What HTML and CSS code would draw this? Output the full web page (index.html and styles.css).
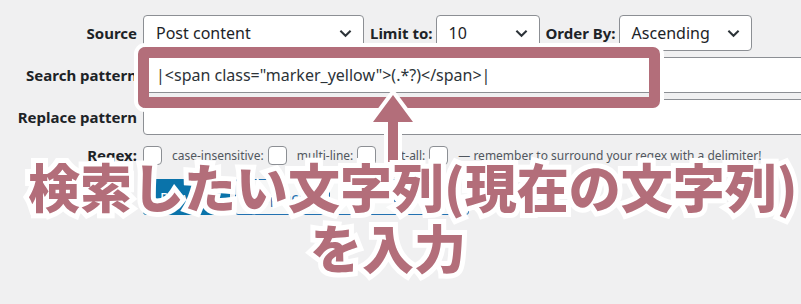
FILE: index.html
```html
<!DOCTYPE html>
<html lang="ja">
<head>
  <meta charset="UTF-8" />
  <title>Search Regex</title>
  <link rel="stylesheet" href="styles.css">
</head>
<body>
  <div class="page">
    <div class="form">
      <div class="label">Source</div>
      <div class="field field-row">
        <div class="select select-source">
          <span>Post content</span>
          <svg class="chevron" viewBox="0 0 14 9"><path d="M1.5 1.5 L7 7 L12.5 1.5" /></svg>
        </div>
        <span class="inline-label">Limit to:</span>
        <div class="select select-limit">
          <span>10</span>
          <svg class="chevron" viewBox="0 0 14 9"><path d="M1.5 1.5 L7 7 L12.5 1.5" /></svg>
        </div>
        <span class="inline-label">Order By:</span>
        <div class="select select-order">
          <span>Ascending</span>
          <svg class="chevron" viewBox="0 0 14 9"><path d="M1.5 1.5 L7 7 L12.5 1.5" /></svg>
        </div>
      </div>

      <div class="label">Search pattern</div>
      <div class="field">
        <div class="input">|&lt;span class="marker_yellow"&gt;(.*?)&lt;/span&gt;|</div>
      </div>

      <div class="label">Replace pattern</div>
      <div class="field">
        <div class="input"></div>
      </div>

      <div class="label label-regex">Regex:</div>
      <div class="field checks">
        <span class="checkbox"></span>
        <span class="check-label">case-insensitive:</span>
        <span class="checkbox"></span>
        <span class="check-label">multi-line:</span>
        <span class="checkbox"></span>
        <span class="check-label">dot-all:</span>
        <span class="checkbox"></span>
        <span class="check-note">— remember to surround your regex with a delimiter!</span>
      </div>

      <div></div>
      <div class="field buttons">
        <span class="button button-primary">Preview</span>
        <span class="button">Replace</span>
        <span class="button">Replace &amp; Save</span>
      </div>
    </div>

    <!-- annotation overlay -->
    <div class="callout"></div>
    <svg class="arrow" viewBox="0 0 801 304">
      <polygon points="393,95 413,122 398,122 398,162 388,162 388,122 373,122" />
    </svg>
    <div class="caption">
      <div class="caption-line">検索したい文字列(現在の文字列)</div>
      <div class="caption-line caption-line-2">を入力</div>
    </div>
  </div>
</body>
</html>
```

FILE: styles.css
```css
body {
  margin: 0;
  background-color: #f0f0f1;
  color: #1d2327;
  font-family: "Noto Sans", "Open Sans", sans-serif;
  overflow: hidden;
}
.page {
  position: relative;
  width: 801px;
  height: 304px;
  overflow: hidden;
}
.form {
  display: grid;
  grid-template-columns: 137px 680px;
  column-gap: 6px;
  row-gap: 6px;
  padding-top: 15px;
}
.label {
  display: flex;
  align-items: center;
  justify-content: flex-end;
  font-weight: bold;
  font-size: 15px;
  white-space: nowrap;
  color: #1d2327;
}
.label-regex {
  margin-top: 4px;
}
.field {
  display: flex;
  align-items: center;
}
.inline-label {
  font-weight: bold;
  font-size: 15px;
  margin: 0 3px 0 6px;
}
.select {
  box-sizing: border-box;
  height: 36px;
  display: flex;
  align-items: center;
  justify-content: space-between;
  padding: 0 11px 0 12px;
  background: #fff;
  border: 1px solid #8c8f94;
  border-radius: 4px;
  font-size: 16px;
}
.select-source { width: 221px; }
.select-limit { width: 104px; }
.select-order { width: 133px; }
.chevron {
  width: 13px;
  height: 9px;
  fill: none;
  stroke: #2c3338;
  stroke-width: 2.2;
}
.input {
  box-sizing: border-box;
  width: 680px;
  height: 36px;
  display: flex;
  align-items: center;
  padding: 0 12px;
  background: #fff;
  border: 1px solid #8c8f94;
  border-radius: 4px;
  font-size: 16px;
  color: #2c3338;
  white-space: nowrap;
}
.checks {
  margin-top: 4px;
  font-size: 12px;
  color: #50575e;
  white-space: nowrap;
}
.checkbox {
  box-sizing: border-box;
  flex: none;
  width: 19px;
  height: 19px;
  background: #fff;
  border: 1px solid #8c8f94;
  border-radius: 4px;
  margin-right: 10px;
}
.check-label {
  margin-right: 4px;
}
.buttons {
  margin-top: 8px;
  gap: 5px;
}
.button {
  box-sizing: border-box;
  height: 36px;
  display: flex;
  align-items: center;
  padding: 0 16px;
  border: 1px solid #2271b1;
  border-radius: 3px;
  background: #f6f7f7;
  color: #2271b1;
  font-size: 15px;
}
.button-primary {
  width: 87px;
  background: #0a73aa;
  border-color: #0a73aa;
  color: #fff;
}
.callout {
  position: absolute;
  left: 138px;
  top: 47px;
  width: 522px;
  height: 61px;
  box-sizing: border-box;
  border: 11px solid #b36e7a;
  border-radius: 7px;
  box-shadow: 0 0 0 4px #fff;
}
.arrow {
  position: absolute;
  left: 0;
  top: 0;
  width: 801px;
  height: 304px;
}
.arrow polygon {
  fill: #b36e7a;
  stroke: #fff;
  stroke-width: 8;
  stroke-linejoin: round;
  paint-order: stroke fill;
}
.caption {
  position: absolute;
  left: 28px;
  top: 155px;
  font-family: "Noto Sans CJK JP", sans-serif;
  font-weight: 900;
  font-size: 52px;
  line-height: 61px;
  color: #b36e7a;
  -webkit-text-stroke: 10px #fff;
  paint-order: stroke fill;
  white-space: nowrap;
}
.caption-line-2 {
  margin-left: 282px;
}
```
